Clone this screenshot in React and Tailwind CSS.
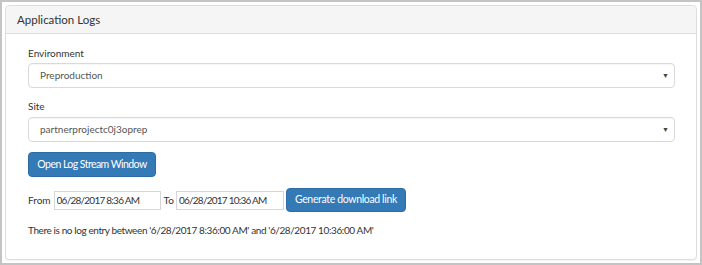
const FONT = { fontFamily: 'Lato, "Liberation Sans", sans-serif' };

const SelectBox = ({ value }) => (
  <div className="flex items-center justify-between h-[25px] pl-[11px] pr-[5px] border border-[#d9d9d9] rounded-[4px] bg-white shadow-[inset_0_1px_1px_rgba(0,0,0,0.04)]">
    <span className="text-[10px] text-[#555]">{value}</span>
    <span className="text-[7px] text-[#444] leading-none">▼</span>
  </div>
);

const App = () => {
  return (
    <div className="w-[702px] h-[265px] bg-white border-2 border-[#c4c4c4] pt-[3px] px-[3px] text-[#333]" style={FONT}>
      <div className="h-[255px] border border-[#dddddd] rounded-[4px] shadow-[0_1px_1px_rgba(0,0,0,0.05)] bg-white">
        <div className="h-[28px] flex items-center px-[11px] bg-[#f5f5f5] border-b border-[#dddddd] rounded-t-[4px] text-[11.5px] text-[#333]">
          Application Logs
        </div>
        <div className="pl-[22px] pr-[21px] pt-[11px]">
          <div className="text-[10px] text-[#333] h-[17px] leading-[17px]">Environment</div>
          <div className="mt-[1px]">
            <SelectBox value="Preproduction" />
          </div>
          <div className="text-[10px] text-[#333] h-[17px] leading-[17px] mt-[10px]">Site</div>
          <div className="mt-[2px]">
            <SelectBox value="partnerprojectc0j3oprep" />
          </div>
          <button className="mt-[10px] h-[25px] w-[128px] whitespace-nowrap rounded-[4px] bg-[#337ab7] border border-[#2e6da4] text-white text-[10.5px] tracking-[-0.55px]">
            Open Log Stream Window
          </button>
          <div className="mt-[11px] flex items-center text-[10px]">
            <span className="mr-[3px]">From</span>
            <input
              readOnly
              value="06/28/2017 8:36 AM"
              className="w-[107px] h-[19px] border border-[#d6d6d6] px-[2px] text-[10px] tracking-[-0.75px] text-[#333] outline-none"
            />
            <span className="ml-[3px] mr-[2px]">To</span>
            <input
              readOnly
              value="06/28/2017 10:36 AM"
              className="w-[108px] h-[19px] border border-[#d6d6d6] px-[2px] text-[10px] tracking-[-0.75px] text-[#333] outline-none"
            />
            <button className="ml-[2px] h-[24px] w-[120px] whitespace-nowrap rounded-[4px] bg-[#337ab7] border border-[#2e6da4] text-white text-[10.5px] tracking-[-0.35px]">
              Generate download link
            </button>
          </div>
          <div className="mt-[10px] text-[10px] leading-[16px] tracking-[-0.4px] text-[#333]">
            There is no log entry between '6/28/2017 8:36:00 AM' and '6/28/2017 10:36:00 AM'
          </div>
        </div>
      </div>
    </div>
  );
};

export default App;
